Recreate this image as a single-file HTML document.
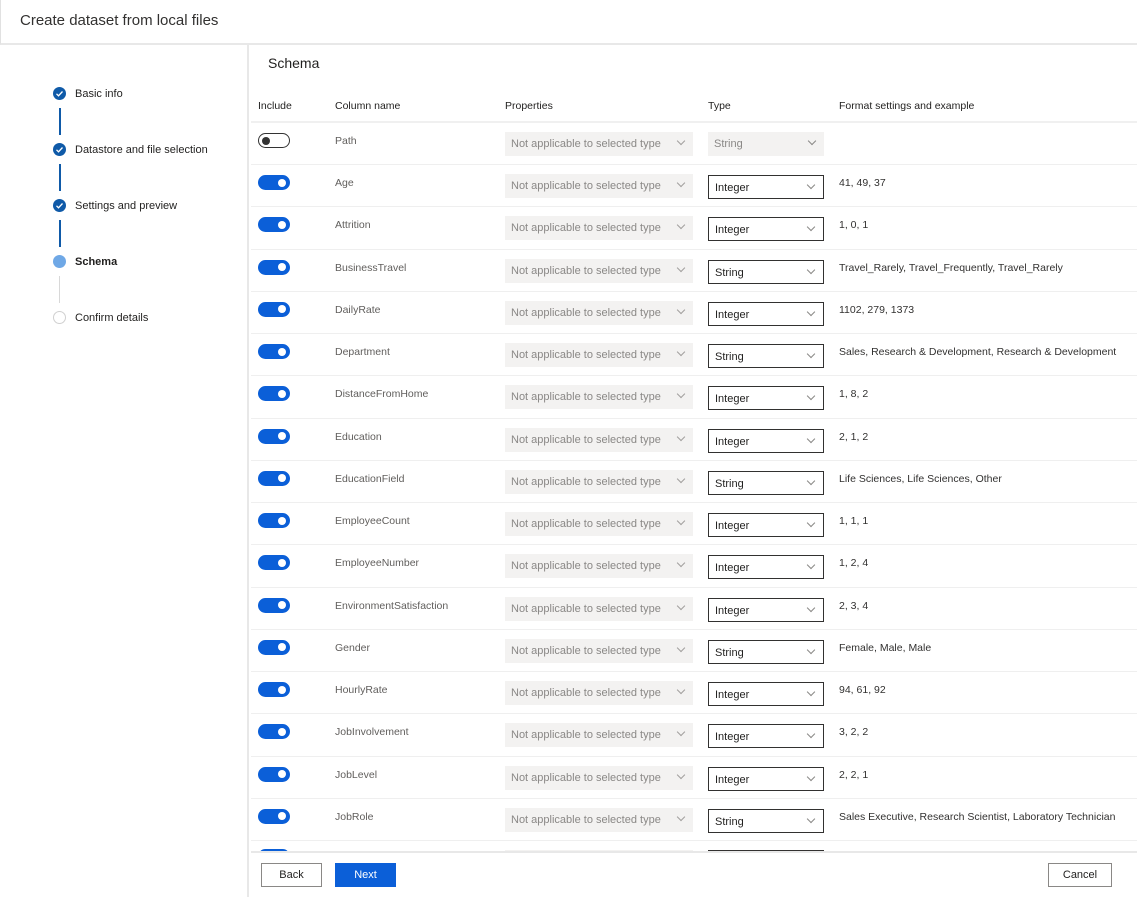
<!DOCTYPE html>
<html><head><meta charset="utf-8"><style>
*{box-sizing:border-box;margin:0;padding:0}
body{width:1137px;height:897px;overflow:hidden;background:#fff;font-family:"Liberation Sans",sans-serif;color:#323130;position:relative}
.hdr{position:absolute;left:0;top:0;width:1137px;height:45px;border-bottom:2px solid #e8e8e8;border-left:1px solid #e1e1e1}
.hdr span{position:absolute;left:19px;top:12px;font-size:15px;color:#323130}
.nav{position:absolute;left:0;top:45px;width:249px;height:852px;border-right:2px solid #e8e8e8}
.step{position:absolute;left:53px;font-size:11px;color:#201f1e}
.step .c{position:absolute;left:0;top:0;width:13px;height:13px;border-radius:50%;background:#0f5aa8}
.step .t{position:absolute;left:22px;top:1px;white-space:nowrap;line-height:13px}
.vl{position:absolute;left:59px;width:2px;background:#0f5aa8}
h2{position:absolute;left:268px;top:55px;font-size:14px;font-weight:normal;color:#201f1e}
.th{position:absolute;top:100px;font-size:10.5px;color:#201f1e}
.row{position:absolute;left:251px;width:886px;height:42.25px;border-top:1px solid #efefef}
.tg{position:absolute;left:7px;top:10px;width:32px;height:15px;border-radius:8px;background:#0b5fd8}
.tg:after{content:"";position:absolute;right:4px;top:3.5px;width:8px;height:8px;border-radius:50%;background:#fff}
.tg.off{background:#fff;border:1px solid #333}
.tg.off:after{left:3px;top:2.5px;right:auto;background:#333}
.nm{position:absolute;left:84px;top:12px;font-size:10.5px;color:#605e5c}
.pr{position:absolute;left:254px;top:9px;width:188px;height:24px;background:#f3f2f1;font-size:11px;color:#8a8886;padding:6px 0 0 6px}
.ty{position:absolute;left:457px;top:10px;width:116px;height:24px;border:1px solid #323130;font-size:11px;color:#201f1e;padding:6px 0 0 6px}
.ty.dis{border:none;background:#f3f2f1;color:#8a8886;top:9px}
.ch{position:absolute;right:9px;top:6px;width:6px;height:6px;border-right:1px solid #a19f9d;border-bottom:1px solid #a19f9d;transform:rotate(45deg)}
.ty .ch{border-color:#8a8886}
.fm{position:absolute;left:588px;top:12px;font-size:10.5px;color:#323130;white-space:nowrap}
.ftr{position:absolute;left:251px;top:851px;width:886px;height:46px;background:#fff;border-top:2px solid #e8e8e8}
.btn{position:absolute;top:10px;height:24px;font-size:11px;text-align:center;line-height:22px;border:1px solid #8a8886;background:#fff;color:#201f1e}
</style></head><body>
<div class="hdr"><span>Create dataset from local files</span></div>
<div class="nav">
<div class="step" style="top:42px"><div class="c"><svg width="13" height="13"><path d="M3.5 6.8l2 2 4-4.3" stroke="#fff" stroke-width="1.3" fill="none"/></svg></div><div class="t">Basic info</div></div>
<div class="vl" style="top:63px;height:27px"></div>
<div class="step" style="top:98px"><div class="c"><svg width="13" height="13"><path d="M3.5 6.8l2 2 4-4.3" stroke="#fff" stroke-width="1.3" fill="none"/></svg></div><div class="t">Datastore and file selection</div></div>
<div class="vl" style="top:119px;height:27px"></div>
<div class="step" style="top:154px"><div class="c"><svg width="13" height="13"><path d="M3.5 6.8l2 2 4-4.3" stroke="#fff" stroke-width="1.3" fill="none"/></svg></div><div class="t">Settings and preview</div></div>
<div class="vl" style="top:175px;height:27px"></div>
<div class="step" style="top:210px"><div class="c" style="background:#6fa8e6"></div><div class="t" style="font-weight:bold">Schema</div></div>
<div class="vl" style="top:231px;height:27px;background:#d8d8d8;width:1px"></div>
<div class="step" style="top:266px"><div class="c" style="background:#fff;border:1px solid #d0d0d0"></div><div class="t">Confirm details</div></div>
</div>
<h2>Schema</h2>
<div class="th" style="left:258px">Include</div>
<div class="th" style="left:335px">Column name</div>
<div class="th" style="left:505px">Properties</div>
<div class="th" style="left:708px">Type</div>
<div class="th" style="left:839px">Format settings and example</div>

<div class="row" style="top:121px;border-top:2px solid #f0f0f0"><div class="tg off"></div><div class="nm">Path</div><div class="pr">Not applicable to selected type<i class="ch"></i></div><div class="ty dis">String<i class="ch"></i></div></div>
<div class="row" style="top:164px"><div class="tg"></div><div class="nm">Age</div><div class="pr">Not applicable to selected type<i class="ch"></i></div><div class="ty">Integer<i class="ch"></i></div><div class="fm">41, 49, 37</div></div>
<div class="row" style="top:206.25px"><div class="tg"></div><div class="nm">Attrition</div><div class="pr">Not applicable to selected type<i class="ch"></i></div><div class="ty">Integer<i class="ch"></i></div><div class="fm">1, 0, 1</div></div>
<div class="row" style="top:248.5px"><div class="tg"></div><div class="nm">BusinessTravel</div><div class="pr">Not applicable to selected type<i class="ch"></i></div><div class="ty">String<i class="ch"></i></div><div class="fm">Travel_Rarely, Travel_Frequently, Travel_Rarely</div></div>
<div class="row" style="top:290.75px"><div class="tg"></div><div class="nm">DailyRate</div><div class="pr">Not applicable to selected type<i class="ch"></i></div><div class="ty">Integer<i class="ch"></i></div><div class="fm">1102, 279, 1373</div></div>
<div class="row" style="top:333px"><div class="tg"></div><div class="nm">Department</div><div class="pr">Not applicable to selected type<i class="ch"></i></div><div class="ty">String<i class="ch"></i></div><div class="fm">Sales, Research &amp; Development, Research &amp; Development</div></div>
<div class="row" style="top:375.25px"><div class="tg"></div><div class="nm">DistanceFromHome</div><div class="pr">Not applicable to selected type<i class="ch"></i></div><div class="ty">Integer<i class="ch"></i></div><div class="fm">1, 8, 2</div></div>
<div class="row" style="top:417.5px"><div class="tg"></div><div class="nm">Education</div><div class="pr">Not applicable to selected type<i class="ch"></i></div><div class="ty">Integer<i class="ch"></i></div><div class="fm">2, 1, 2</div></div>
<div class="row" style="top:459.75px"><div class="tg"></div><div class="nm">EducationField</div><div class="pr">Not applicable to selected type<i class="ch"></i></div><div class="ty">String<i class="ch"></i></div><div class="fm">Life Sciences, Life Sciences, Other</div></div>
<div class="row" style="top:502px"><div class="tg"></div><div class="nm">EmployeeCount</div><div class="pr">Not applicable to selected type<i class="ch"></i></div><div class="ty">Integer<i class="ch"></i></div><div class="fm">1, 1, 1</div></div>
<div class="row" style="top:544.25px"><div class="tg"></div><div class="nm">EmployeeNumber</div><div class="pr">Not applicable to selected type<i class="ch"></i></div><div class="ty">Integer<i class="ch"></i></div><div class="fm">1, 2, 4</div></div>
<div class="row" style="top:586.5px"><div class="tg"></div><div class="nm">EnvironmentSatisfaction</div><div class="pr">Not applicable to selected type<i class="ch"></i></div><div class="ty">Integer<i class="ch"></i></div><div class="fm">2, 3, 4</div></div>
<div class="row" style="top:628.75px"><div class="tg"></div><div class="nm">Gender</div><div class="pr">Not applicable to selected type<i class="ch"></i></div><div class="ty">String<i class="ch"></i></div><div class="fm">Female, Male, Male</div></div>
<div class="row" style="top:671px"><div class="tg"></div><div class="nm">HourlyRate</div><div class="pr">Not applicable to selected type<i class="ch"></i></div><div class="ty">Integer<i class="ch"></i></div><div class="fm">94, 61, 92</div></div>
<div class="row" style="top:713.25px"><div class="tg"></div><div class="nm">JobInvolvement</div><div class="pr">Not applicable to selected type<i class="ch"></i></div><div class="ty">Integer<i class="ch"></i></div><div class="fm">3, 2, 2</div></div>
<div class="row" style="top:755.5px"><div class="tg"></div><div class="nm">JobLevel</div><div class="pr">Not applicable to selected type<i class="ch"></i></div><div class="ty">Integer<i class="ch"></i></div><div class="fm">2, 2, 1</div></div>
<div class="row" style="top:797.75px"><div class="tg"></div><div class="nm">JobRole</div><div class="pr">Not applicable to selected type<i class="ch"></i></div><div class="ty">String<i class="ch"></i></div><div class="fm">Sales Executive, Research Scientist, Laboratory Technician</div></div>
<div class="row" style="top:840px"><div class="tg" style="top:8px"></div><div class="pr"></div><div class="ty" style="top:9px"></div></div>

<div class="ftr">
<div class="btn" style="left:10px;width:61px">Back</div>
<div class="btn" style="left:84px;width:61px;background:#0b5fd8;border-color:#0b5fd8;color:#fff">Next</div>
<div class="btn" style="left:797px;width:64px">Cancel</div>
</div>
</body></html>
